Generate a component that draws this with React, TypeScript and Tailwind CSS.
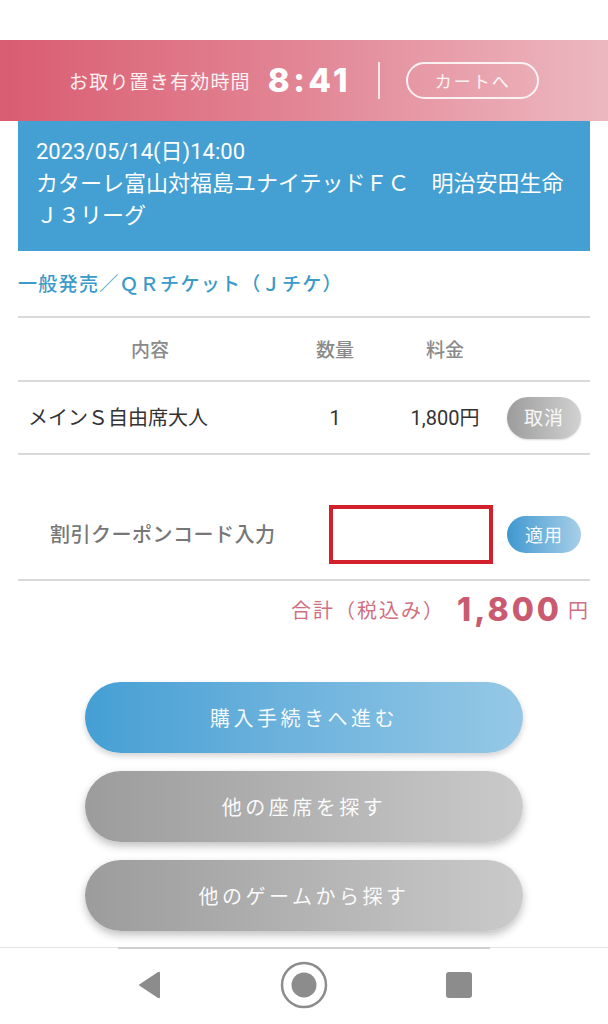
import React from "react";

const jp = { fontFamily: '"Noto Sans CJK JP", "Noto Sans", sans-serif' };
const rb = { fontFamily: 'Roboto, "Noto Sans CJK JP", sans-serif' };
const num = { fontFamily: 'Inter, "Noto Sans CJK JP", sans-serif' };

export default function App() {
  return (
    <div className="w-[608px] h-[1024px] bg-white flex flex-col overflow-hidden" style={jp}>
      <div className="h-[40px] shrink-0" />
      {/* header */}
      <div className="h-[81px] shrink-0 flex items-center pl-[69px] bg-gradient-to-r from-[#d95c71] via-[#e28696] to-[#ecb8c0] text-white">
        <span className="text-[19px] tracking-[1.2px] text-white/90 leading-none">お取り置き有効時間</span>
        <span className="ml-[17px] text-[33px] font-extrabold tracking-[3.5px] leading-none" style={num}>8:41</span>
        <div className="ml-[27px] w-[2px] h-[37px] bg-white/80" />
        <div className="ml-[26px] w-[133px] h-[37px] rounded-full border-2 border-white/85 flex items-center justify-center text-[17px] tracking-[2px] text-white/90">
          カートへ
        </div>
      </div>
      {/* event box */}
      <div className="mx-[18px] h-[130px] shrink-0 bg-[#44a0d3] text-white px-[18px] pt-[15px] text-[22px] leading-[32px]" style={rb}>
        <div>2023/05/14(日)14:00</div>
        <div>カターレ富山対福島ユナイテッドＦＣ　明治安田生命</div>
        <div>Ｊ３リーグ</div>
      </div>
      {/* section title */}
      <div className="h-[65px] shrink-0 flex items-center pl-[18px] text-[19px] text-[#3a9ac9] font-medium tracking-[1.3px]">
        一般発売／ＱＲチケット（Ｊチケ）
      </div>
      <div className="mx-[18px] flex flex-col">
        <div className="h-[2px] bg-[#d9d9d9]" />
        {/* table header */}
        <div className="h-[62px] grid grid-cols-[264px_106px_114px_88px] items-center text-[19px] text-[#8a8a8a] font-medium">
          <div className="text-center">内容</div>
          <div className="text-center">数量</div>
          <div className="text-center">料金</div>
          <div />
        </div>
        <div className="h-[2px] bg-[#d9d9d9]" />
        {/* row */}
        <div className="h-[71px] grid grid-cols-[264px_106px_114px_88px] items-center text-[20px] text-[#333]" style={rb}>
          <div className="pl-[10px]">メインＳ自由席大人</div>
          <div className="text-center">1</div>
          <div className="text-center">1,800円</div>
          <div className="flex justify-end pr-[9px]">
            <div className="w-[74px] h-[42px] rounded-full bg-gradient-to-r from-[#9c9c9c] to-[#d2d2d2] flex items-center justify-center text-white/90 text-[19px] tracking-[1px] shadow-[0_1px_2px_rgba(0,0,0,0.15)]" style={jp}>
              取消
            </div>
          </div>
        </div>
        <div className="h-[2px] bg-[#d9d9d9]" />
        {/* coupon */}
        <div className="h-[124px] flex items-start pt-[50px]">
          <div className="w-[311px] h-[58px] flex items-center pl-[32px] text-[20px] text-[#777] font-medium tracking-[0.5px]">
            割引クーポンコード入力
          </div>
          <div className="w-[164px] h-[59px] border-[4px] border-[#d3202d]" />
          <div className="ml-[14px] h-[58px] flex items-center">
            <div className="w-[74px] h-[37px] rounded-full bg-gradient-to-r from-[#3c98cf] to-[#a6cfe9] flex items-center justify-center text-white/95 text-[18px] tracking-[1px]">
              適用
            </div>
          </div>
        </div>
        <div className="h-[2px] bg-[#d9d9d9]" />
      </div>
      {/* total */}
      <div className="h-[58px] shrink-0 flex items-center justify-end pr-[20px]">
        <span className="text-[20px] text-[#d0707f] tracking-[2px]">合計（税込み）</span>
        <span className="ml-[12px] text-[32px] font-extrabold text-[#c95a6f] tracking-[3px] leading-none" style={num}>1,800</span>
        <span className="ml-[6px] text-[20px] text-[#d0707f]">円</span>
      </div>
      {/* buttons */}
      <div className="mt-[43px] flex flex-col items-center gap-[18px]">
        <div className="w-[438px] h-[71px] rounded-full bg-gradient-to-r from-[#449fd4] to-[#95c8e6] flex items-center justify-center text-white/95 text-[20px] tracking-[3.5px] shadow-[0_3px_6px_rgba(0,0,0,0.18)]">
          購入手続きへ進む
        </div>
        <div className="w-[438px] h-[71px] rounded-full bg-gradient-to-r from-[#9c9c9c] to-[#cacaca] flex items-center justify-center text-white/95 text-[20px] tracking-[3.5px] shadow-[0_4px_8px_rgba(0,0,0,0.25)]">
          他の座席を探す
        </div>
        <div className="w-[438px] h-[71px] rounded-full bg-gradient-to-r from-[#9c9c9c] to-[#cacaca] flex items-center justify-center text-white/95 text-[20px] tracking-[3.5px] shadow-[0_4px_8px_rgba(0,0,0,0.25)]">
          他のゲームから探す
        </div>
      </div>
      {/* bottom lines */}
      <div className="mt-[16px] h-[1px] bg-[#e4e4e4] flex justify-center">
        <div className="w-[372px] h-[2px] bg-[#cfcfcf]" />
      </div>
      {/* nav bar */}
      <div className="flex-1 flex items-center pb-[2px]">
        <div className="w-[608px] grid grid-cols-[152px_152px_152px_152px] items-center">
          <div className="flex justify-end pr-[0px]">
            <svg width="28" height="30" viewBox="0 0 28 30" className="mr-[-12px]">
              <path d="M24 3 L24 27 Q24 29 22 28 L4 16 Q2 15 4 14 L22 2 Q24 1 24 3 Z" fill="#8c8c8c" />
            </svg>
          </div>
          <div className="col-span-2 flex justify-center">
            <svg width="50" height="50" viewBox="0 0 50 50">
              <circle cx="25" cy="25" r="22" fill="none" stroke="#8c8c8c" strokeWidth="2.5" />
              <circle cx="25" cy="25" r="12.5" fill="#8c8c8c" />
            </svg>
          </div>
          <div className="flex justify-start">
            <div className="ml-[-10px] w-[26px] h-[26px] rounded-[3px] bg-[#8c8c8c]" />
          </div>
        </div>
      </div>
    </div>
  );
}
